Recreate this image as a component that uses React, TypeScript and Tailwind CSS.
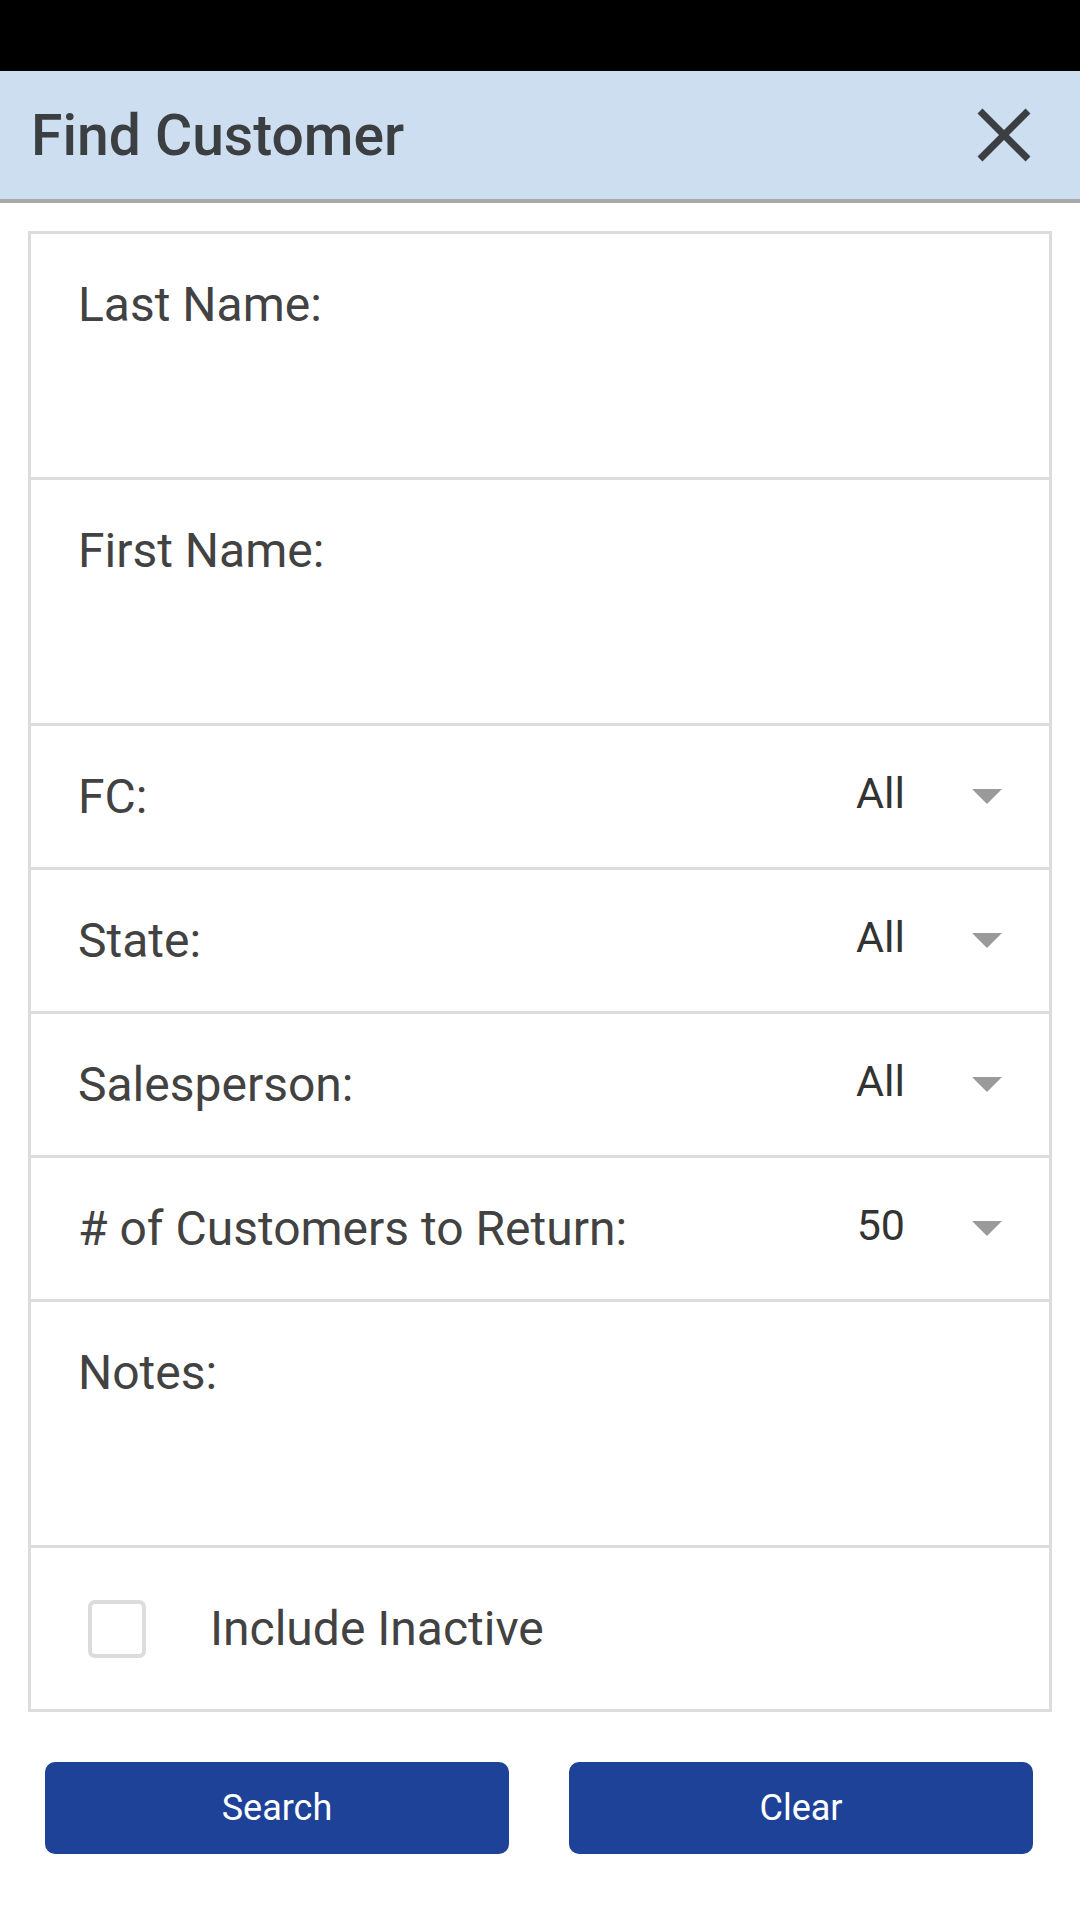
const TextRow = ({ label, h }: { label: string; h: string }) => (
  <div className={`${h} pl-[47px] pt-[43px]`}>
    <p className="text-[48px] leading-[55px] text-[#424242]">{label}</p>
  </div>
);

const SelectRow = ({ label, value }: { label: string; value: string }) => (
  <div className="h-[144px] flex items-center pl-[47px] pr-[47px]">
    <p className="flex-1 text-[48px] leading-[55px] text-[#424242]">{label}</p>
    <span className="w-[60px] mb-[6px] text-right text-[43px] leading-[55px] text-[#333333]">{value}</span>
    <svg className="ml-[67px]" width="30" height="15" viewBox="0 0 30 15">
      <path d="M0 0 L30 0 L15 15 Z" fill="#9a9a9a" />
    </svg>
  </div>
);

export default function App() {
  return (
    <div className="w-[1080px] h-[1920px] bg-white font-['Roboto',sans-serif]">
      <div className="h-[71px] bg-black" />
      <header className="h-[132px] bg-[#cddef0] border-b-[4px] border-[#a8a8a8] flex items-center justify-between pl-[31px] pr-[48px]">
        <h1 className="text-[57px] font-medium text-[#3c3f42] leading-none">Find Customer</h1>
        <svg width="56" height="56" viewBox="0 0 56 56">
          <path d="M4 4 L52 52 M52 4 L4 52" stroke="#3c3f42" strokeWidth="7" strokeLinecap="butt" />
        </svg>
      </header>

      <div className="mt-[28px] mx-[28px] border-[3px] border-[#dcdcdc] divide-y-[3px] divide-[#dcdcdc]">
        <TextRow label="Last Name:" h="h-[246px]" />
        <TextRow label="First Name:" h="h-[246px]" />
        <SelectRow label="FC:" value="All" />
        <SelectRow label="State:" value="All" />
        <SelectRow label="Salesperson:" value="All" />
        <SelectRow label="# of Customers to Return:" value="50" />
        <TextRow label="Notes:" h="h-[246px]" />
        <div className="h-[161px] flex items-center pl-[57px]">
          <div className="w-[58px] h-[58px] rounded-[7px] border-[4px] border-[#dcdcdc] bg-white" />
          <p className="ml-[64px] text-[48px] leading-[55px] text-[#424242]">Include Inactive</p>
        </div>
      </div>

      <div className="mt-[50px] px-[45px] flex gap-[60px]">
        <button className="w-[464px] h-[92px] rounded-[10px] bg-[#1e4297] text-white text-[36px]">Search</button>
        <button className="w-[464px] h-[92px] rounded-[10px] bg-[#1e4297] text-white text-[36px]">Clear</button>
      </div>
    </div>
  );
}
